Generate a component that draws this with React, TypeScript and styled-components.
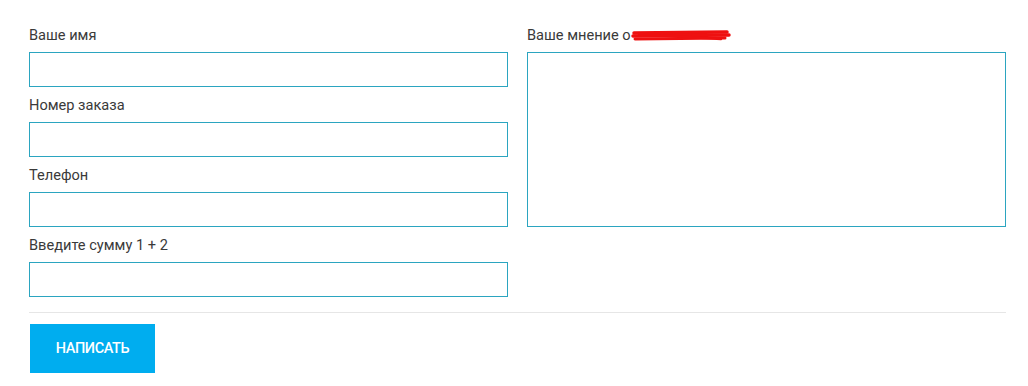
import { createGlobalStyle, styled } from "styled-components";

const GlobalStyle = createGlobalStyle`
  body {
    margin: 0;
    background: #ffffff;
    font-family: Roboto, "Liberation Sans", sans-serif;
  }
`;

const Form = styled.form`
  width: 977px;
  padding: 26px 0 0 29px;
`;

const Columns = styled.div`
  display: grid;
  grid-template-columns: 479px 479px;
  column-gap: 19px;
`;

const Column = styled.div`
  display: flex;
  flex-direction: column;
  gap: 9px;
`;

const Field = styled.div`
  display: flex;
  flex-direction: column;
`;

const Label = styled.label`
  font-size: 14.6px;
  line-height: 18px;
  color: #3a3a3a;
  margin-bottom: 8px;
  display: flex;
  align-items: center;
`;

const Input = styled.input`
  box-sizing: border-box;
  width: 100%;
  height: 35px;
  border: 1px solid #2ba5c0;
  background: #fff;
  outline: none;
  padding: 0 10px;
  font: inherit;
`;

const TextArea = styled.textarea`
  box-sizing: border-box;
  width: 100%;
  height: 175px;
  border: 1px solid #2ba5c0;
  background: #fff;
  outline: none;
  resize: none;
  padding: 8px 10px;
  font: inherit;
`;

const Divider = styled.hr`
  border: none;
  border-top: 1px solid #e6e6e6;
  margin: 15px 0 11px;
`;

const Submit = styled.button`
  width: 125px;
  height: 49px;
  margin-left: 1px;
  border: none;
  background: #00adef;
  color: #ffffff;
  font-family: Roboto, "Liberation Sans", sans-serif;
  font-size: 14.5px;
  font-weight: 500;
  text-transform: uppercase;
  letter-spacing: -0.4px;
  cursor: pointer;
`;

const Scribble = styled.svg`
  margin-left: 0;
  margin-top: 1px;
`;

function Redaction() {
  return (
    <Scribble width="100" height="14" viewBox="0 0 100 14">
      <g stroke="#ee1111" strokeLinecap="round" fill="none">
        <path d="M3 4 L96 3" strokeWidth="3.5" />
        <path d="M2 7 L98 6" strokeWidth="3.5" />
        <path d="M4 10 L94 9" strokeWidth="3" />
        <path d="M8 5 L90 10" strokeWidth="2.5" />
      </g>
    </Scribble>
  );
}

const fields = ["Ваше имя", "Номер заказа", "Телефон", "Введите сумму 1 + 2"];

export default function App() {
  return (
    <>
      <GlobalStyle />
      <Form onSubmit={(e) => e.preventDefault()}>
        <Columns>
          <Column>
            {fields.map((f) => (
              <Field key={f}>
                <Label>{f}</Label>
                <Input type="text" />
              </Field>
            ))}
          </Column>
          <Column>
            <Field>
              <Label>
                Ваше мнение о
                <Redaction />
              </Label>
              <TextArea />
            </Field>
          </Column>
        </Columns>
        <Divider />
        <Submit type="submit">Написать</Submit>
      </Form>
    </>
  );
}
